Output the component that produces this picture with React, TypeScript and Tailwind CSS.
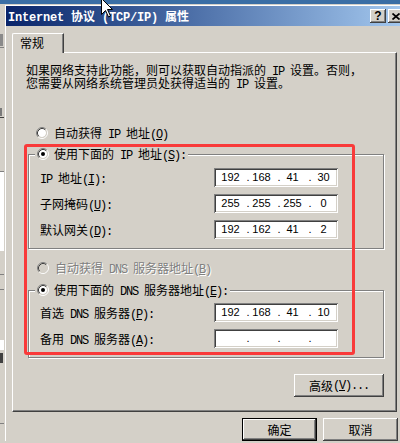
import { Fragment } from 'react';

const mono = "font-['Liberation_Mono',monospace] tracking-[-1.2px] leading-[0px]";
const raised =
    'shadow-[inset_-1px_-1px_0_#404040,inset_1px_1px_0_#fff,inset_-2px_-2px_0_#808080,inset_2px_2px_0_#d4d0c8]';
const sunken =
    'shadow-[inset_1px_1px_0_#808080,inset_-1px_-1px_0_#fff,inset_2px_2px_0_#404040,inset_-2px_-2px_0_#d4d0c8]';

// ASCII runs get a monospace face so they keep the 6px cell of the old bitmap font
function Txt({ s, u, latin = mono }: { s: string; u?: string; latin?: string }) {
    const parts = s.split(/([ -~]+)/).filter(Boolean);
    return (
        <>
            {parts.map((p, i) => {
                if (!/^[ -~]+$/.test(p)) return <span key={i}>{p}</span>;
                const k = u ? p.indexOf(`(${u})`) : -1;
                if (k < 0)
                    return (
                        <span key={i} className={latin}>
                            {p}
                        </span>
                    );
                return (
                    <span key={i} className={latin}>
                        {p.slice(0, k + 1)}
                        <span className="underline">{u}</span>
                        {p.slice(k + 2)}
                    </span>
                );
            })}
        </>
    );
}

function Radio({ checked, disabled }: { checked?: boolean; disabled?: boolean }) {
    return (
        <svg width="12" height="12" viewBox="0 0 12 12" className="shrink-0">
            <circle cx="6" cy="6" r="4" fill={disabled ? '#d4d0c8' : '#fff'} />
            <path d="M2.11 9.89A5.5 5.5 0 0 1 9.89 2.11" fill="none" stroke="#808080" />
            <path d="M9.89 2.11A5.5 5.5 0 0 1 2.11 9.89" fill="none" stroke="#fff" />
            <path d="M2.82 9.18A4.5 4.5 0 0 1 9.18 2.82" fill="none" stroke="#404040" />
            <path d="M9.18 2.82A4.5 4.5 0 0 1 2.82 9.18" fill="none" stroke="#d4d0c8" />
            {checked && <circle cx="6" cy="6" r="2" fill="#000" />}
        </svg>
    );
}

function RadioRow({
    label,
    u,
    checked,
    disabled,
    className = '',
}: {
    label: string;
    u: string;
    checked?: boolean;
    disabled?: boolean;
    className?: string;
}) {
    return (
        <div
            className={`flex h-[14px] items-center whitespace-nowrap leading-[14px] ${
                disabled ? 'text-[#808080] [text-shadow:1px_1px_0_#fff]' : ''
            } ${className}`}
        >
            <Radio checked={checked} disabled={disabled} />
            <span>
                <Txt s={label} u={u} />
            </span>
        </div>
    );
}

function IpBox({ parts }: { parts: string[] }) {
    return (
        <div
            className={`flex h-[19px] w-[124px] items-center bg-white pl-[4.5px] font-['Liberation_Sans',sans-serif] text-[11px] leading-[13px] ${sunken}`}
        >
            {parts.map((p, i) => (
                <Fragment key={i}>
                    {i > 0 && <span className="w-[7px] text-right">.</span>}
                    <span className="w-[24px] text-center">{p}</span>
                </Fragment>
            ))}
        </div>
    );
}

function Field({ label, u, parts }: { label: string; u: string; parts: string[] }) {
    return (
        <>
            <span className="whitespace-nowrap leading-[14px]">
                <Txt s={label} u={u} />
            </span>
            <IpBox parts={parts} />
        </>
    );
}

function Group({
    legend,
    u,
    className,
    padTop,
    children,
}: {
    legend: string;
    u: string;
    className: string;
    padTop: string;
    children: React.ReactNode;
}) {
    return (
        <fieldset
            className={`ml-[15px] w-[356px] border border-[#808080] pl-[6px] shadow-[1px_1px_0_#fff,inset_1px_1px_0_#fff] ${className}`}
        >
            <legend className="bg-[#d4d0c8] px-[2px]">
                <RadioRow label={legend} u={u} checked className="gap-[5px]" />
            </legend>
            <div className={`ml-[5px] grid grid-cols-[174px_124px] items-center gap-y-[7px] pb-[9px] ${padTop}`}>
                {children}
            </div>
        </fieldset>
    );
}

function Button({ children, primary, width }: { children: React.ReactNode; primary?: boolean; width: string }) {
    return (
        <div
            className={`flex h-[23px] items-center justify-center bg-[#d4d0c8] leading-[14px] ${width} ${
                primary ? 'border border-black' : ''
            } ${raised}`}
        >
            {children}
        </div>
    );
}

export default function App() {
    return (
        <div className="relative h-[443px] w-[400px] overflow-hidden bg-[#d4d0c8] font-['Noto_Sans_CJK_SC',sans-serif] text-[12px] text-black">
            <div className="h-[4px] bg-[#3a6ea5]" />
            <div className="flex">
                {/* strip of the window behind */}
                <div className="flex h-[439px] w-[4px] shrink-0 flex-col bg-[#d4d0c8]">
                    <div className="mt-[30px] h-[12px] w-[3px] bg-[#8a8a8a]" />
                    <div className="mt-[1px] h-px bg-[#808080]" />
                    <div className="mt-[60px] h-[8px] w-[2px] bg-[#7a7a7a]" />
                    <div className="mt-[1px] h-px bg-[#404040]" />
                    <div className="mt-[53px] h-[80px] border-t border-[#808080] bg-white" />
                    <div className="mt-[23px] h-px bg-[#808080]" />
                    <div className="mt-[14px] h-px bg-[#808080]" />
                    <div className="mt-[50px] h-[10px] bg-white" />
                    <div className="mt-[3px] h-[10px] w-[3px] bg-[#404040]" />
                    <div className="mt-[60px] h-px bg-[#808080]" />
                </div>

                <div className="w-[402px] shrink-0 border-l border-t border-[#d4d0c8]">
                    <div className="border-l border-t border-white">
                        <div className="flex h-[20px] items-center justify-between bg-linear-to-r from-[#0a246a] to-[#a6caf0] pl-[2px] pr-[2px]">
                            <span className="whitespace-nowrap font-bold leading-[14px] text-white">
                                <Txt
                                    s="Internet 协议 (TCP/IP) 属性"
                                    latin="font-['Liberation_Mono',monospace] tracking-[-0.2px] leading-[0px]"
                                />
                            </span>
                            <div className="flex gap-[2px]">
                                <div
                                    className={`flex h-[14px] w-[16px] items-center justify-center bg-[#d4d0c8] font-['Liberation_Sans',sans-serif] text-[12px] font-bold leading-[12px] ${raised}`}
                                >
                                    ?
                                </div>
                                <div className={`flex h-[14px] w-[16px] items-center justify-center bg-[#d4d0c8] ${raised}`}>
                                    <svg width="8" height="7" viewBox="0 0 8 7">
                                        <path d="M0.5 0.5L7.5 6.5M7.5 0.5L0.5 6.5" stroke="#000" strokeWidth="1.7" />
                                    </svg>
                                </div>
                            </div>
                        </div>

                        <div className="pl-[6px] pt-[7px]">
                            <div className="relative z-10 -mb-px h-[20px] w-[52px] rounded-tl-[2px] border-l border-t border-r border-white border-r-[#404040] bg-[#d4d0c8] pl-[7px] pt-[2px] leading-[14px] shadow-[inset_-1px_0_0_#808080]">
                                常规
                            </div>
                            <div className="h-[360px] w-[385px] border border-white border-b-[#404040] border-r-[#404040] pt-[10px] shadow-[inset_-1px_-1px_0_#808080]">
                                <p className="ml-[13px] whitespace-nowrap leading-[13px]">
                                    <Txt s="如果网络支持此功能，则可以获取自动指派的 IP 设置。否则，" />
                                    <br />
                                    <Txt s="您需要从网络系统管理员处获得适当的 IP 设置。" />
                                </p>

                                <RadioRow label="自动获得 IP 地址(O)" u="O" className="ml-[23px] mt-[37px] gap-[6px]" />

                                <Group legend="使用下面的 IP 地址(S):" u="S" className="mt-[7px]" padTop="pt-[7px]">
                                    <Field label="IP 地址(I):" u="I" parts={['192', '168', '41', '30']} />
                                    <Field label="子网掩码(U):" u="U" parts={['255', '255', '255', '0']} />
                                    <Field label="默认网关(D):" u="D" parts={['192', '162', '41', '2']} />
                                </Group>

                                <RadioRow
                                    label="自动获得 DNS 服务器地址(B)"
                                    u="B"
                                    disabled
                                    className="ml-[24px] mt-[12px] gap-[6px]"
                                />

                                <Group
                                    legend="使用下面的 DNS 服务器地址(E):"
                                    u="E"
                                    className="mt-[8px]"
                                    padTop="pt-[6px]"
                                >
                                    <Field label="首选 DNS 服务器(P):" u="P" parts={['192', '168', '41', '10']} />
                                    <Field label="备用 DNS 服务器(A):" u="A" parts={['', '', '', '']} />
                                </Group>

                                <div className="ml-[15px] mt-[16px] flex w-[356px] justify-end">
                                    <Button width="w-[90px]">
                                        <Txt s="高级(V)..." u="V" />
                                    </Button>
                                </div>
                            </div>

                            <div className="mt-[6px] flex w-[386px] justify-end gap-[6px]">
                                <Button primary width="w-[75px]">
                                    确定
                                </Button>
                                <Button width="w-[75px]">取消</Button>
                            </div>
                        </div>
                    </div>
                </div>
            </div>

            {/* red highlight drawn over the dialog */}
            <div className="absolute left-[24px] top-[144px] h-[211px] w-[331px] rounded-[3px] border-[3px] border-[#f93a3a]" />

            {/* mouse pointer */}
            <svg className="absolute left-[101px] top-[-2px]" width="13" height="20" viewBox="0 0 13 20">
                <path
                    d="M0.5 0.5L0.5 16.5L4.5 12.5L7.5 19L9.5 18L6.5 11.5L11.5 11.5Z"
                    fill="#fff"
                    stroke="#000"
                    strokeLinejoin="miter"
                />
            </svg>
        </div>
    );
}
